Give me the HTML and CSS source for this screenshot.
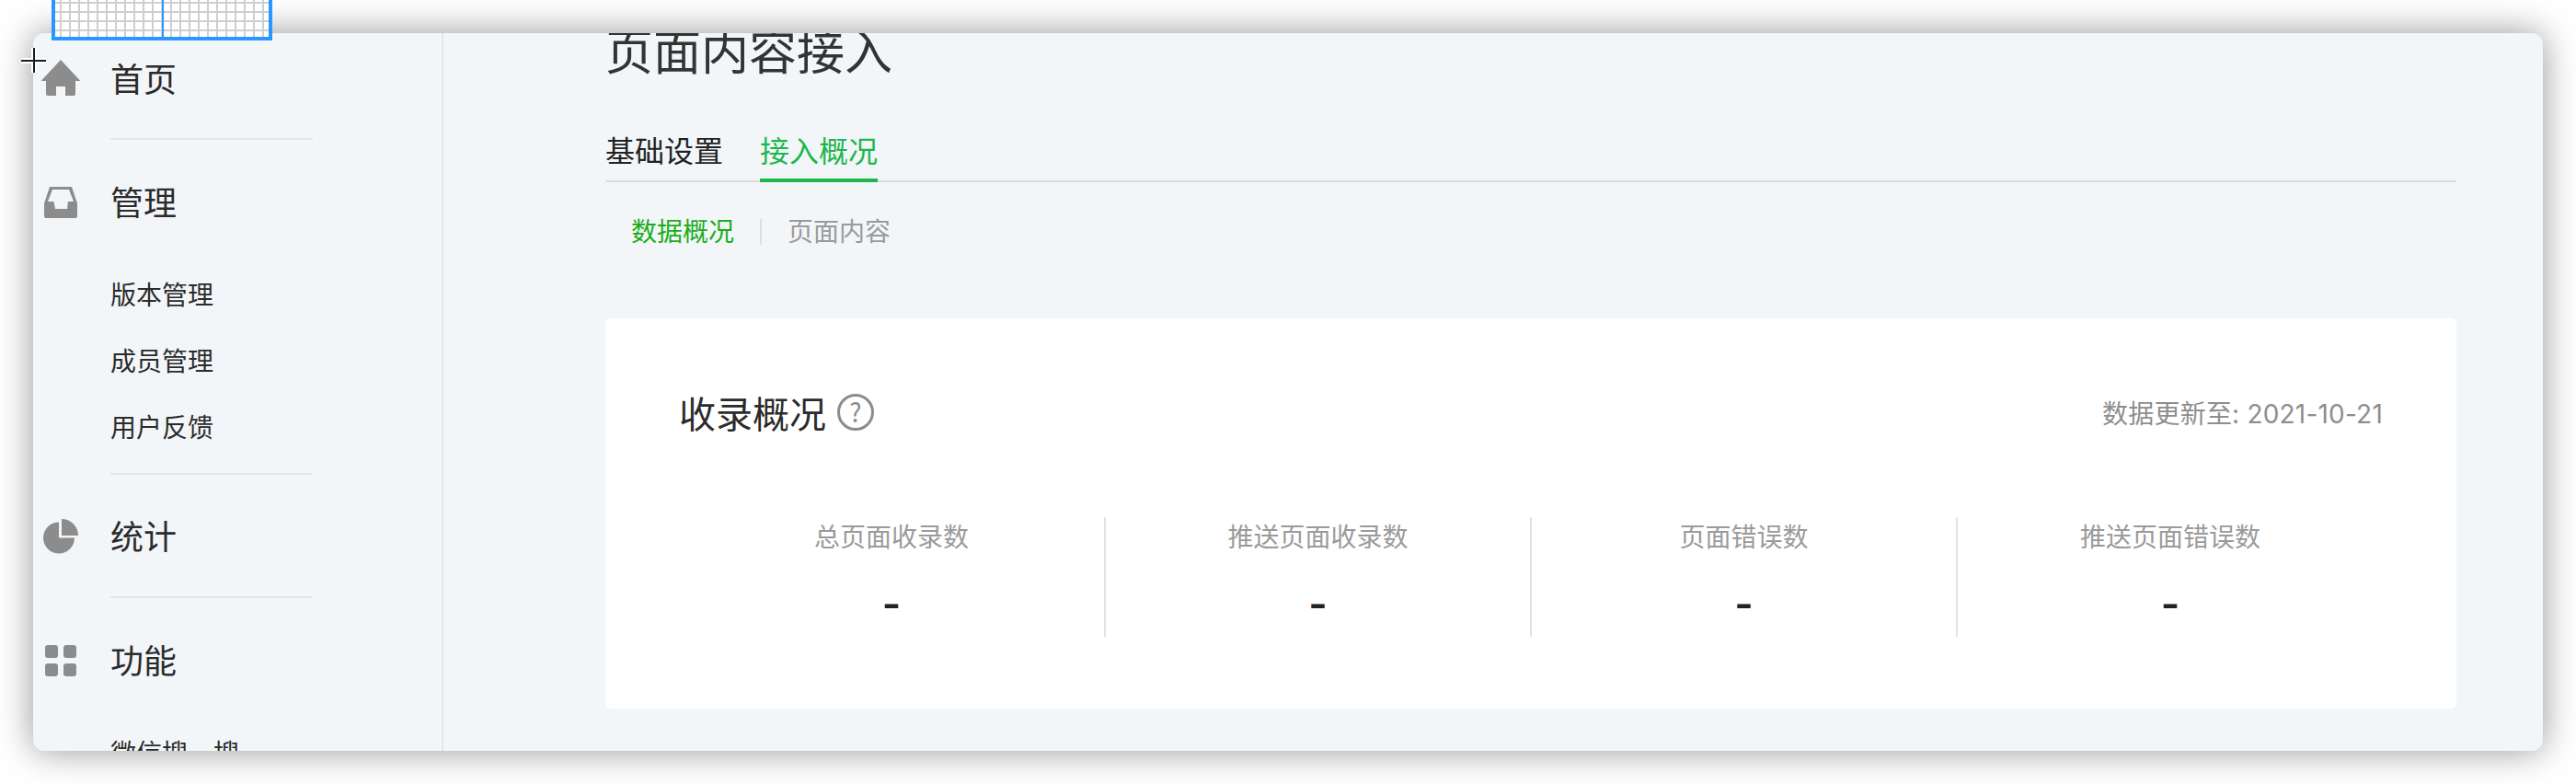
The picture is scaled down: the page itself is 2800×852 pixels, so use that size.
FILE: index.html

```html
<!DOCTYPE html>
<html lang="zh-CN">
<head>
    <meta charset="UTF-8">
    <title>页面内容接入</title>
    <link rel="stylesheet" href="styles.css">
</head>
<body>
    <!-- Screenshot selection box and cursor -->
    <div class="selection"></div>
    <div class="cursor"></div>

    <div class="window">
        <!-- Side nav -->
        <aside class="sidebar">
            <div class="nav-group nav-home">
                <div class="nav-head">
                    <span class="nav-icon icon-home">
                        <svg width="42" height="39" viewBox="0 0 42 39"><path d="M21 0 L42 22.5 Q42 23 41 23 H37 V37 Q37 39 35 39 H26 V29 H16 V39 H7 Q5 39 5 37 V23 H1 Q0 23 0 22.5 Z"/></svg>
                    </span>
                    <span class="nav-text">首页</span>
                </div>
            </div>
            <div class="nav-group nav-manage">
                <div class="nav-head">
                    <span class="nav-icon">
                        <svg width="36" height="34" viewBox="0 0 36 34"><path fill-rule="evenodd" d="M6 0 H30 L36 18 V32 Q36 34 34 34 H2 Q0 34 0 32 V18 Z M9 3 L4 16 H10.5 L12 24 H25 L26 16 H32 L27 3 Z"/></svg>
                    </span>
                    <span class="nav-text">管理</span>
                </div>
                <ul class="nav-sub">
                    <li>版本管理</li>
                    <li>成员管理</li>
                    <li>用户反馈</li>
                </ul>
            </div>
            <div class="nav-group nav-stats">
                <div class="nav-head">
                    <span class="nav-icon">
                        <svg width="38" height="38" viewBox="0 0 38 38"><path d="M17 20.5 V3.5 A17 17 0 1 0 34 20.5 Z"/><path d="M20 18 V0 A18 18 0 0 1 38 18 Z"/></svg>
                    </span>
                    <span class="nav-text">统计</span>
                </div>
            </div>
            <div class="nav-group nav-func">
                <div class="nav-head">
                    <span class="nav-icon">
                        <svg width="34" height="34" viewBox="0 0 34 34"><rect width="14" height="14" rx="3"/><rect x="20" width="14" height="14" rx="3"/><rect y="20" width="14" height="14" rx="3"/><rect x="20" y="20" width="14" height="14" rx="3"/></svg>
                    </span>
                    <span class="nav-text">功能</span>
                </div>
                <ul class="nav-sub">
                    <li>微信搜一搜</li>
                </ul>
            </div>
        </aside>

        <!-- Main content, scrolled a little so the title is cut off -->
        <main class="content">
            <h1 class="page-title">页面内容接入</h1>

            <div class="tabs">
                <a class="tab">基础设置</a>
                <a class="tab tab-active">接入概况</a>
            </div>

            <div class="subtabs">
                <a class="subtab subtab-active">数据概况</a>
                <a class="subtab">页面内容</a>
            </div>

            <section class="card">
                <div class="card-head">
                    <h2 class="card-title">收录概况 <span class="help">?</span></h2>
                    <span class="update-time">数据更新至: 2021-10-21</span>
                </div>
                <div class="stats">
                    <div class="stat">
                        <div class="stat-label">总页面收录数</div>
                        <div class="stat-value">-</div>
                    </div>
                    <div class="stat">
                        <div class="stat-label">推送页面收录数</div>
                        <div class="stat-value">-</div>
                    </div>
                    <div class="stat">
                        <div class="stat-label">页面错误数</div>
                        <div class="stat-value">-</div>
                    </div>
                    <div class="stat">
                        <div class="stat-label">推送页面错误数</div>
                        <div class="stat-value">-</div>
                    </div>
                </div>
            </section>
        </main>
    </div>
</body>
</html>
```

FILE: styles.css

```css
/* ===== BASE ===== */
* {
    margin: 0;
    padding: 0;
    box-sizing: border-box;
}

html, body {
    width: 100%;
    height: 100%;
    overflow: hidden;
    background: #fff;
}

body {
    padding: 36px;
    font-family: "Noto Sans CJK SC", "Noto Sans", sans-serif;
    color: #2b2b2b;
}

/* ===== OVERLAYS ===== */
.selection {
    position: absolute;
    top: 0;
    left: 56px;
    width: 240px;
    height: 44px;
    border: 4px solid #2a96ff;
    border-top: 0;
    z-index: 5;
    background-color: #fff;
    background-image:
        linear-gradient(#cfcfcf 2px, transparent 2px),
        linear-gradient(90deg, #cfcfcf 2px, transparent 2px);
    background-size: 10px 10px;
    background-position: 5px 2px;
}

.selection::after {
    content: "";
    position: absolute;
    top: 0;
    left: 116px;
    width: 2px;
    height: 100%;
    background: #2a96ff;
}

.cursor {
    position: absolute;
    top: 52px;
    left: 23px;
    width: 27px;
    height: 27px;
    z-index: 6;
    background:
        linear-gradient(#1c1c1c, #1c1c1c) center / 2px 100% no-repeat,
        linear-gradient(#1c1c1c, #1c1c1c) center / 100% 2px no-repeat,
        linear-gradient(#fff, #fff) center / 6px 100% no-repeat,
        linear-gradient(#fff, #fff) center / 100% 6px no-repeat;
}

/* ===== WINDOW ===== */
.window {
    display: flex;
    height: 780px;
    background: #f3f6f9;
    border-radius: 12px;
    overflow: hidden;
    box-shadow: 0 0 38px rgba(0, 0, 0, 0.42);
}

/* ===== SIDE NAV ===== */
.sidebar {
    flex: 0 0 446px;
    border-right: 2px solid #e4e4e9;
    overflow: hidden;
}

.nav-group {
    position: relative;
    padding: 32px 0 28px;
}

.nav-group::after {
    content: "";
    position: absolute;
    left: 84px;
    bottom: 0;
    width: 220px;
    height: 2px;
    background: #e4e4e9;
}

.nav-home {
    padding-top: 14px;
    padding-bottom: 30px;
}

.nav-manage {
    padding-bottom: 17px;
}

.nav-stats {
    padding-top: 31px;
    padding-bottom: 31px;
}

.nav-func::after {
    display: none;
}

.nav-head {
    display: flex;
    align-items: center;
    height: 72px;
    font-size: 36px;
}

.nav-text {
    padding-bottom: 4px;
}

.nav-icon {
    flex: 0 0 60px;
    margin-right: 24px;
    display: flex;
    justify-content: center;
    align-items: center;
}

.icon-home {
    padding-bottom: 3px;
}

.nav-icon svg {
    display: block;
    fill: #8c8c8c;
}

.nav-sub {
    list-style: none;
    margin-top: 27px;
    padding-left: 84px;
}

.nav-sub li {
    height: 72px;
    line-height: 72px;
    font-size: 28px;
}

/* ===== MAIN ===== */
.content {
    flex: 1;
    min-width: 0;
    padding: 0 94px 0 176px;
}

.page-title {
    margin-top: -18px;
    height: 72px;
    line-height: 72px;
    font-size: 52px;
    font-weight: 400;
    color: #333;
}

/* ===== TABS ===== */
.tabs {
    display: flex;
    gap: 40px;
    margin-top: 51px;
    border-bottom: 2px solid #d9dadd;
}

.tab {
    height: 55px;
    line-height: 42px;
    font-size: 32px;
    color: #222;
}

.tab-active {
    margin-bottom: -2px;
    height: 57px;
    color: #1db64d;
    border-bottom: 4px solid #1db64d;
}

.subtabs {
    display: flex;
    align-items: center;
    margin-top: 34px;
    padding-left: 28px;
}

.subtab {
    position: relative;
    height: 40px;
    line-height: 36px;
    font-size: 28px;
    color: #9a9a9a;
}

.subtab-active {
    color: #1aad19;
    margin-right: 58px;
}

.subtab-active::after {
    content: "";
    position: absolute;
    top: 6px;
    right: -30px;
    width: 2px;
    height: 28px;
    background: #dfdfe2;
}

/* ===== CARD ===== */
.card {
    margin-top: 74px;
    padding: 76px 80px 78px;
    background: #fff;
    border-radius: 6px;
}

.card-head {
    display: flex;
    justify-content: space-between;
    align-items: center;
    height: 56px;
}

.card-title {
    display: flex;
    align-items: center;
    gap: 12px;
    margin-top: -4px;
    font-size: 40px;
    font-weight: 400;
    color: #2b2b2b;
}

.help {
    width: 40px;
    height: 40px;
    line-height: 33px;
    text-align: center;
    font-size: 28px;
    color: #8c8c8c;
    border: 3px solid #8c8c8c;
    border-radius: 50%;
}

.update-time {
    font-family: Inter, "Noto Sans CJK SC", sans-serif;
    font-size: 28px;
    letter-spacing: 0.2px;
    color: #8e8e8e;
    margin-top: -4px;
}

/* ===== STATS ===== */
.stats {
    display: grid;
    grid-template-columns: 464px 463px 463px 1fr;
    margin-top: 84px;
}

.stat {
    height: 130px;
    text-align: center;
    border-right: 2px solid #e2e2e6;
}

.stat:last-child {
    border-right: 0;
}

.stat-label {
    height: 40px;
    line-height: 40px;
    font-size: 28px;
    color: #9a9a9a;
}

.stat-value {
    margin-top: 24px;
    height: 60px;
    line-height: 60px;
    font-family: Inter, sans-serif;
    font-size: 44px;
    font-weight: 600;
    color: #222;
}
```
